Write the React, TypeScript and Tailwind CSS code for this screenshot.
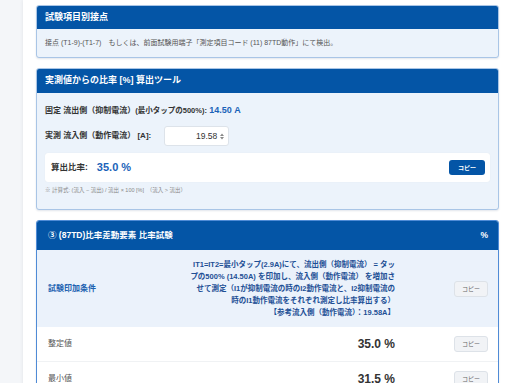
const font = { fontFamily: '"Liberation Sans", "Noto Sans CJK JP", sans-serif' }

function CopyButton({ primary }: { primary?: boolean }) {
  return primary ? (
    <button className="h-[15px] w-[36px] rounded-[3px] bg-[#0455a6] text-[6px] font-bold leading-none text-white">
      コピー
    </button>
  ) : (
    <button className="h-[16px] w-[34px] rounded-[3px] border border-[#dde2e8] bg-[#f1f3f6] text-[6px] leading-none text-[#666]">
      コピー
    </button>
  )
}

export default function App() {
  return (
    <div className="flex min-h-screen" style={font}>
      <div className="w-[23px] shrink-0 bg-[#f4f6f9]" />
      <main className="flex flex-1 flex-col gap-[10px] bg-white px-[13px] pt-[5px] pb-8 shadow-[-1px_0_3px_rgba(0,0,0,0.05)]">
        <section className="overflow-hidden rounded-[3px] border border-[#a9c5e6] bg-[#ecf3fb] shadow-[0_1px_2px_rgba(0,40,90,0.12)]">
          <h2 className="flex h-[23px] items-center bg-[#0455a6] px-[8px] text-[9px] font-bold text-white">試験項目別接点</h2>
          <p className="flex h-[28px] items-center px-[8px] text-[7px] text-[#555]">
            接点 (T1-9)-(T1-7)　もしくは、前面試験用端子「測定項目コード (11) 87TD動作」にて検出。
          </p>
        </section>

        <section className="overflow-hidden rounded-[3px] border border-[#a9c5e6] bg-[#ecf3fb] shadow-[0_1px_2px_rgba(0,40,90,0.12)]">
          <h2 className="flex h-[24px] items-center bg-[#0455a6] px-[8px] text-[9px] font-bold text-white">
            実測値からの比率 [%] 算出ツール
          </h2>
          <div className="px-[8px] pt-[10px] pb-[14px]">
            <p className="text-[8px] font-bold leading-[14px] text-[#333]">
              固定 流出側（抑制電流）<span className="text-[7.5px]">(最小タップの500%):</span>{' '}
              <span className="text-[9px] text-[#1a62b8]">14.50 A</span>
            </p>
            <div className="mt-[8px] flex items-center gap-[13px]">
              <span className="text-[8px] font-bold text-[#333]">実測 流入側（動作電流） [A]:</span>
              <div className="flex h-[20px] w-[65px] items-center justify-end gap-[3px] rounded-[3px] border border-[#dde3ea] bg-white pr-[4px]">
                <span className="text-[8.5px] text-[#333]">19.58</span>
                <svg width="4" height="7" viewBox="0 0 4 7">
                  <path d="M0 3L2 0.5L4 3Z M0 4L2 6.5L4 4Z" fill="#888" />
                </svg>
              </div>
            </div>
            <div className="mt-[7px] flex h-[29px] items-center rounded-[3px] bg-white pr-[5px] pl-[6px] shadow-[0_0_1px_rgba(0,0,0,0.08)]">
              <span className="text-[8.5px] font-bold text-[#333]">算出比率:</span>
              <span className="ml-[9px] text-[11px] font-bold text-[#1a62b8]">35.0 %</span>
              <span className="ml-auto flex">
                <CopyButton primary />
              </span>
            </div>
            <p className="mt-[3px] text-[5.5px] leading-[10px] text-[#888]">
              ※ 計算式: (流入 − 流出) / 流出 × 100 [%]　（流入 &gt; 流出）
            </p>
          </div>
        </section>

        <section className="overflow-hidden rounded-[3px] border border-[#4f8bd6] bg-white shadow-[0_1px_2px_rgba(0,40,90,0.12)]">
          <div className="grid h-[29px] grid-cols-[1fr_98px] items-center bg-[#0455a6] text-[8.5px] font-bold text-white">
            <span className="pl-[11px]">③ (87TD)比率差動要素 比率試験</span>
            <span className="pr-[10px] text-right">%</span>
          </div>
          <div className="grid h-[77px] grid-cols-[130px_1fr_98px] items-center bg-[#ebf2fb]">
            <span className="pl-[11px] text-[8px] font-bold text-[#2061b0]">試験印加条件</span>
            <p className="pr-[5px] text-right text-[7.5px] font-bold leading-[12px] text-[#1d4f95]">
              IT1=IT2=最小タップ(2.9A)にて、流出側（抑制電流） = タッ<br />
              プの500% (14.50A) を印加し、流入側（動作電流） を増加さ<br />
              せて測定（I1が抑制電流の時のI2動作電流と、I2抑制電流の<br />
              時のI1動作電流をそれぞれ測定し比率算出する）<br />
              【参考流入側（動作電流）：19.58A】
            </p>
            <span className="flex justify-end pr-[10px]">
              <CopyButton />
            </span>
          </div>
          {[
            ['整定値', '35.0 %'],
            ['最小値', '31.5 %'],
            ['最大値', '38.5 %'],
          ].map(([label, value]) => (
            <div key={label} className="grid h-[35px] grid-cols-[130px_1fr_98px] items-center border-b border-[#f0f2f4]">
              <span className="pl-[11px] text-[8px] text-[#555]">{label}</span>
              <span className="pr-[5px] text-right text-[12px] font-bold text-[#333]">{value}</span>
              <span className="flex justify-end pr-[10px]">
                <CopyButton />
              </span>
            </div>
          ))}
        </section>
      </main>
    </div>
  )
}
